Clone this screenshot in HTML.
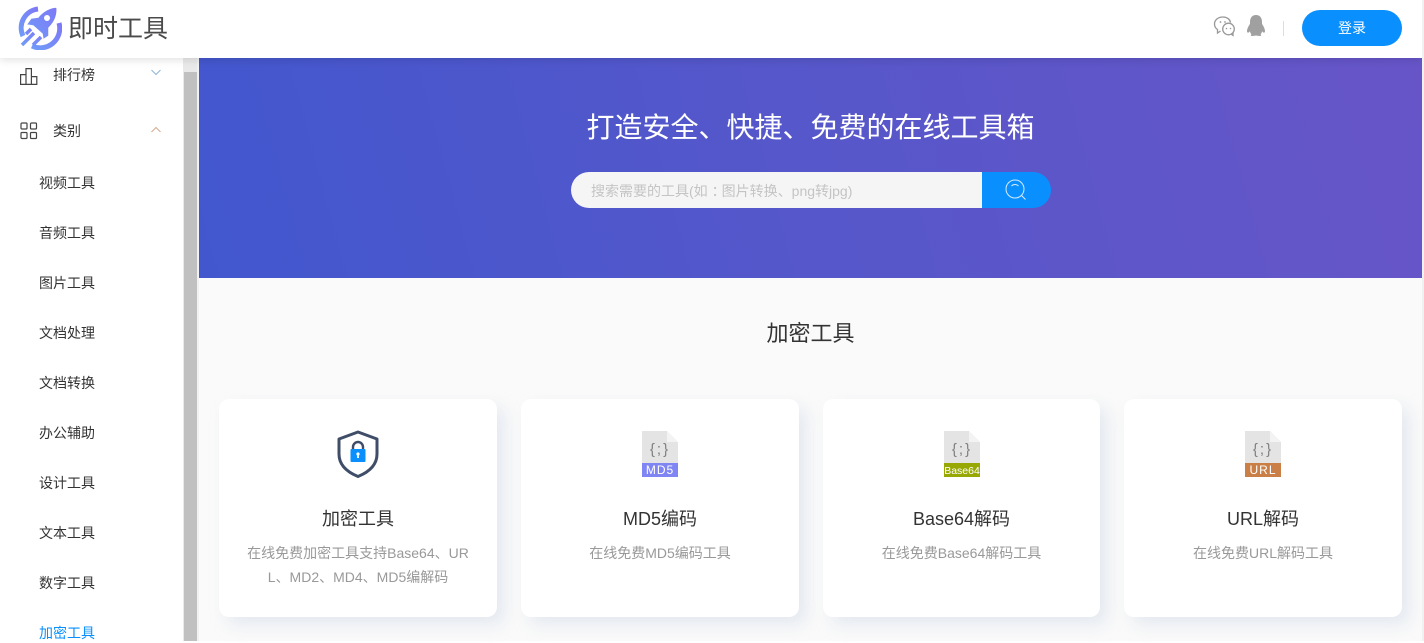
<!DOCTYPE html>
<html lang="zh-CN"><head><meta charset="utf-8"><title>即时工具</title>
<style>
*{box-sizing:border-box}
html,body{margin:0;padding:0;width:1424px;height:641px;overflow:hidden;background:#fff;font-family:"Liberation Sans","Noto Sans CJK SC",sans-serif}
.a{position:absolute;white-space:nowrap}
#hd{left:0;top:0;width:1424px;height:58px;background:#fff;box-shadow:0 2px 8px rgba(0,0,0,.12);z-index:5}
.m{left:39px;font-size:14px;line-height:20px;color:#333}
.card{position:absolute;top:399px;height:218px;background:#fff;border-radius:10px;box-shadow:8px 8px 16px rgba(220,226,236,.7)}
.card .t{position:absolute;left:0;right:0;top:108px;text-align:center;font-size:18px;line-height:24px;color:#333}
.card .d{position:absolute;left:24px;right:24px;top:142px;text-align:center;font-size:14px;line-height:24px;color:#999;word-break:break-all}
.card svg{position:absolute;top:31px;left:50%;margin-left:-22px}
</style></head><body>
<div class="a" style="left:197px;top:58px;width:2px;height:583px;background:#f1f1f1"></div>
<div class="a" style="left:183px;top:58px;width:14px;height:583px;background:#e9e9e9"></div>
<div class="a" style="left:184px;top:72px;width:13px;height:569px;background:#c0c0c0"></div>
<div class="a" style="left:1422px;top:0;width:2px;height:641px;background:#f1f1f1;z-index:9"></div>

<div class="a" id="hd" style="width:1422px">
<svg class="a" style="left:18px;top:6px" width="44" height="44" viewBox="0 0 44 44">
<defs><linearGradient id="g" x1="0" y1="1" x2="1" y2="0"><stop offset="0" stop-color="#6f9bf8"/><stop offset="1" stop-color="#7f78f6"/></linearGradient></defs>
<path d="M20 3A19 19 0 0 0 5 30" fill="none" stroke="url(#g)" stroke-width="5"/>
<path d="M41 17A19.500 19.500 0 0 1 14 40" fill="none" stroke="url(#g)" stroke-width="5"/>
<path d="M39 1C40 9 37 16 31 22L31 30 25 34 24 28 15 20 8 19 13 12 20 11C25 5 32 1 39 1z" fill="url(#g)" stroke="#fff" stroke-width="1.500"/>
<path d="M4 39L16 27M15 39L23 31M8 28L13 23" fill="none" stroke="url(#g)" stroke-width="3.500"/>
<circle cx="29" cy="12" r="3" fill="#fff"/>
</svg>
<div class="a" style="left:68px;top:11px;font-size:25px;line-height:36px;color:#4a4a4a">即时工具</div>
<svg class="a" style="left:1213px;top:15px" width="23" height="23" viewBox="0 0 23 23" fill="none" stroke="#999" stroke-width="1.300">
<path d="M10 2C5 2 1.500 5 1.500 9c0 2.500 1.200 4.300 3 5.500L4.500 18l3-2"/><path d="M10 2c4 0 7 2.300 7.600 5.500"/>
<circle cx="15.500" cy="14" r="5.800" fill="#fff"/><path d="M18 19l2 1.500v-3" />
<circle cx="7.500" cy="7" r=".9" fill="#999" stroke="none"/><circle cx="12" cy="7" r=".9" fill="#999" stroke="none"/>
<circle cx="13.500" cy="13.500" r=".8" fill="#999" stroke="none"/><circle cx="17.500" cy="13.500" r=".8" fill="#999" stroke="none"/>
</svg>
<svg class="a" style="left:1246px;top:15px" width="20" height="22" viewBox="0 0 20 22"><path d="M10 0c4 0 6 3 6 7v2c1 1 3 5 3 7 0 2-1 2-2.500 1l-.5-1c0 1-.5 2.500-1.500 3.500 1 .5 1 1.500-.5 1.500-2 0-3-.5-4-.5s-2 .5-4 .5c-1.500 0-1.500-1-.5-1.500C4.500 18.500 4 17 4 16l-.5 1C2 18 1 18 1 16c0-2 2-6 3-7V7c0-4 2-7 6-7z" fill="#a0a0a0"/></svg>
<div class="a" style="left:1283px;top:21px;width:1px;height:15px;background:#ddd"></div>
<div class="a" style="left:1302px;top:10px;width:100px;height:36px;border-radius:18px;background:#0a8fff;color:#fff;font-size:14px;line-height:36px;text-align:center">登录</div>
</div>

<svg class="a" style="left:19px;top:66px" width="20" height="20" viewBox="0 0 20 20" fill="none" stroke="#444" stroke-width="1.200"><path d="M1.600 8.600h5.400v9.800H1.600zM7 2.600h5.400v15.800H7zM12.400 10.600h5.400v7.800h-5.400z"/></svg>
<div class="a" style="left:53px;top:65px;font-size:14px;line-height:20px;color:#333">排行榜</div>
<svg class="a" style="left:151px;top:69px" width="10" height="7" viewBox="0 0 10 7" fill="none" stroke="#8fb4d8" stroke-width="1"><path d="M.5 1l4.500 4.500L9.500 1"/></svg>
<svg class="a" style="left:20px;top:122px" width="18" height="18" viewBox="0 0 18 18" fill="none" stroke="#444" stroke-width="1.200"><rect x="1" y="1" width="6" height="6" rx="1"/><rect x="10.500" y="1" width="6" height="6" rx="1"/><rect x="1" y="10.500" width="6" height="6" rx="1"/><rect x="10.500" y="10.500" width="6" height="6" rx="1"/></svg>
<div class="a" style="left:53px;top:121px;font-size:14px;line-height:20px;color:#333">类别</div>
<svg class="a" style="left:151px;top:126px" width="10" height="7" viewBox="0 0 10 7" fill="none" stroke="#d8a890" stroke-width="1"><path d="M.5 6L5 1.500 9.500 6"/></svg>
<div class="a m" style="top:173px">视频工具</div>
<div class="a m" style="top:223px">音频工具</div>
<div class="a m" style="top:273px">图片工具</div>
<div class="a m" style="top:323px">文档处理</div>
<div class="a m" style="top:373px">文档转换</div>
<div class="a m" style="top:423px">办公辅助</div>
<div class="a m" style="top:473px">设计工具</div>
<div class="a m" style="top:523px">文本工具</div>
<div class="a m" style="top:573px">数字工具</div>
<div class="a m" style="top:623px;color:#0a8fff">加密工具</div>

<div class="a" style="left:199px;top:58px;width:1223px;height:583px;background:#fafafa"></div>
<div class="a" style="left:199px;top:58px;width:1223px;height:220px;background:linear-gradient(75deg,#4257ce 0%,#5657ca 50%,#6755c8 100%)"></div>
<div class="a" style="left:199px;top:109px;width:1223px;text-align:center;font-size:28px;line-height:38px;color:#fff">打造安全、快捷、免费的在线工具箱</div>
<div class="a" style="left:571px;top:172px;width:411px;height:36px;background:#f5f5f5;border-radius:18px 0 0 18px;padding:1px 0 0 20px;font-size:14px;line-height:36px;color:#c4c4c4">搜索需要的工具(如<span style="position:relative;left:4px">：</span>图片转换、png转jpg)</div>
<div class="a" style="left:982px;top:172px;width:69px;height:36px;background:#0a8fff;border-radius:0 18px 18px 0"></div>
<svg class="a" style="left:1004px;top:178px" width="24" height="24" viewBox="0 0 24 24" fill="none" stroke="#d6ecff" stroke-width="1"><circle cx="11" cy="11" r="9"/><path d="M17.500 17.500l4 4M7.500 8c1.800-2 5-2 7 0"/></svg>

<div class="a" style="left:199px;top:318px;width:1223px;text-align:center;font-size:22px;line-height:32px;color:#333">加密工具</div>

<div class="card" style="left:219px;width:278px">
<svg width="44" height="50" viewBox="0 0 44 50" fill="none"><path d="M22 2L41 9V24c0 11-8 18-19 22.500C11 42 3 35 3 24V9z" stroke="#3f4d68" stroke-width="3" stroke-linejoin="round"/><path d="M17 20v-3a5 5 0 0 1 10 0v3" stroke="#3f4d68" stroke-width="2.400"/><rect x="14.500" y="19" width="15" height="13" rx="1" fill="#0a8fff"/><circle cx="22" cy="24" r="1.600" fill="#fff"/><path d="M21.400 24h1.200l.4 4h-2z" fill="#fff"/></svg>
<div class="t">加密工具</div>
<div class="d">在线免费加密工具支持Base64、URL、MD2、MD4、MD5编解码</div>
</div>
<div class="card" style="left:521px;width:278px">
<svg width="44" height="50" viewBox="0 0 44 50"><path d="M4 1h25l11 11v26H4z" fill="#e4e4e4"/><path d="M29 1l11 11H29z" fill="#f3f3f3"/><text x="22" y="24" text-anchor="middle" font-family="Liberation Sans,sans-serif" font-size="15" letter-spacing="2" fill="#808080">{;}</text><rect x="4" y="33" width="36" height="14" fill="#7f86f4"/><text x="22" y="44" text-anchor="middle" font-family="Liberation Sans,sans-serif" font-size="12" letter-spacing="1" fill="#fff">MD5</text></svg>
<div class="t">MD5编码</div>
<div class="d">在线免费MD5编码工具</div>
</div>
<div class="card" style="left:823px;width:277px">
<svg width="44" height="50" viewBox="0 0 44 50"><path d="M4 1h25l11 11v26H4z" fill="#e4e4e4"/><path d="M29 1l11 11H29z" fill="#f3f3f3"/><text x="22" y="24" text-anchor="middle" font-family="Liberation Sans,sans-serif" font-size="15" letter-spacing="2" fill="#808080">{;}</text><rect x="4" y="33" width="36" height="14" fill="#97a804"/><text x="22" y="44" text-anchor="middle" font-family="Liberation Sans,sans-serif" font-size="10.500" fill="#fff">Base64</text></svg>
<div class="t">Base64解码</div>
<div class="d">在线免费Base64解码工具</div>
</div>
<div class="card" style="left:1124px;width:278px">
<svg width="44" height="50" viewBox="0 0 44 50"><path d="M4 1h25l11 11v26H4z" fill="#e4e4e4"/><path d="M29 1l11 11H29z" fill="#f3f3f3"/><text x="22" y="24" text-anchor="middle" font-family="Liberation Sans,sans-serif" font-size="15" letter-spacing="2" fill="#808080">{;}</text><rect x="4" y="33" width="36" height="14" fill="#c97f45"/><text x="22" y="44" text-anchor="middle" font-family="Liberation Sans,sans-serif" font-size="12" letter-spacing="1" fill="#fff">URL</text></svg>
<div class="t">URL解码</div>
<div class="d">在线免费URL解码工具</div>
</div>
</body></html>
